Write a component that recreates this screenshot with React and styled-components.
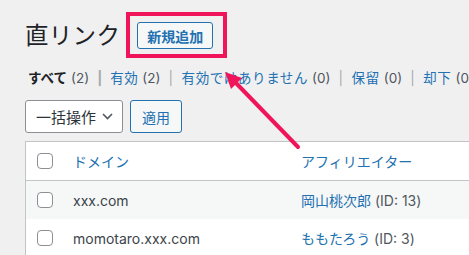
import styled, { createGlobalStyle } from "styled-components";

const GlobalStyle = createGlobalStyle`
  html, body {
    margin: 0;
    padding: 0;
    background: #f0f0f1;
    overflow: hidden;
  }
  body {
    font-family: Inter, "Noto Sans CJK JP", sans-serif;
    color: #3c434a;
  }
`;

const PINK = "#f0145a";
const BLUE = "#2271b1";

const Page = styled.div`
  position: relative;
  width: 469px;
  height: 255px;
  padding: 21px 0 0 25px;
  box-sizing: border-box;
  overflow: hidden;
`;

const TitleRow = styled.div`
  display: flex;
  align-items: center;
  gap: 17px;
  height: 29px;
`;

const Title = styled.h1`
  margin: 0;
  font-size: 23.5px;
  font-weight: 400;
  line-height: 29px;
  color: #1d2327;
  letter-spacing: 0.3px;
`;

const AddWrap = styled.div`
  position: relative;
  display: flex;
`;

const AddButton = styled.button`
  width: 76px;
  height: 27px;
  padding: 0;
  border: 1px solid ${BLUE};
  border-radius: 3px;
  background: #f6f7f7;
  color: ${BLUE};
  font-family: inherit;
  font-size: 14px;
  font-weight: 600;
`;

const Highlight = styled.div`
  position: absolute;
  left: -11px;
  top: -10px;
  width: 101px;
  height: 46px;
  box-sizing: border-box;
  border: 4px solid ${PINK};
  pointer-events: none;
`;

const Filters = styled.ul`
  display: flex;
  align-items: center;
  margin: 18px 0 0 3px;
  padding: 0;
  list-style: none;
  font-size: 13.5px;
  line-height: 20px;
  white-space: nowrap;
`;

const FilterItem = styled.li`
  display: flex;
  align-items: center;
  color: ${(p) => (p.$current ? "#1d2327" : BLUE)};
  font-weight: ${(p) => (p.$current ? 700 : 400)};
  letter-spacing: ${(p) => (p.$current ? "0" : "0.6px")};
`;

const Count = styled.span`
  margin-left: 4px;
  color: #50575e;
  font-weight: 400;
  letter-spacing: 0;
`;

const Sep = styled.span`
  margin: 0 8px;
  color: #a7aaad;
`;

const BulkRow = styled.div`
  display: flex;
  gap: 7px;
  margin-top: 12px;
`;

const BulkSelect = styled.div`
  display: flex;
  align-items: center;
  justify-content: space-between;
  width: 98px;
  height: 33px;
  box-sizing: border-box;
  padding: 0 9px 0 10px;
  border: 1px solid #8c8f94;
  border-radius: 3px;
  background: #fff;
  font-size: 15px;
  color: #2c3338;
`;

const ApplyButton = styled.button`
  width: 52px;
  height: 33px;
  padding: 0;
  border: 1px solid ${BLUE};
  border-radius: 3px;
  background: #f6f7f7;
  color: ${BLUE};
  font-family: inherit;
  font-size: 14px;
`;

const Table = styled.div`
  margin-top: 8px;
  width: 480px;
  border: 1px solid #c3c4c7;
  border-right: none;
  background: #fff;
`;

const Row = styled.div`
  display: grid;
  grid-template-columns: 37px 228px 1fr;
  align-items: center;
  height: 38px;
  background: ${(p) => (p.$alt ? "#f6f7f7" : "#fff")};
  border-bottom: ${(p) => (p.$head ? "1px solid #c3c4c7" : "none")};
  font-size: 14px;
`;

const Check = styled.span`
  width: 16px;
  height: 16px;
  margin-left: 11px;
  box-sizing: border-box;
  border: 1px solid #8c8f94;
  border-radius: 4px;
  background: #fff;
`;

const Cell = styled.span`
  padding-left: 10px;
  color: ${(p) => (p.$link ? BLUE : "#3c434a")};
  white-space: nowrap;
`;

const Name = styled.span`
  color: ${BLUE};
`;

const Muted = styled.span`
  color: #50575e;
`;

const Arrow = styled.svg`
  position: absolute;
  left: 0;
  top: 0;
  pointer-events: none;
`;

const filters = [
  { label: "すべて", count: 2, current: true },
  { label: "有効", count: 2 },
  { label: "有効ではありません", count: 0 },
  { label: "保留", count: 0 },
  { label: "却下", count: 0 },
];

const rows = [
  { domain: "xxx.com", name: "岡山桃次郎", id: 13 },
  { domain: "momotaro.xxx.com", name: "ももたろう", id: 3 },
];

export default function App() {
  return (
    <>
      <GlobalStyle />
      <Page>
        <TitleRow>
          <Title>直リンク</Title>
          <AddWrap>
            <AddButton>新規追加</AddButton>
            <Highlight />
          </AddWrap>
        </TitleRow>

        <Filters>
          {filters.map((f, i) => (
            <FilterItem key={f.label} $current={f.current}>
              {f.label}
              <Count>({f.count})</Count>
              {i < filters.length - 1 && <Sep>|</Sep>}
            </FilterItem>
          ))}
        </Filters>

        <BulkRow>
          <BulkSelect>
            一括操作
            <svg width="11" height="7" viewBox="0 0 11 7">
              <path d="M1 1l4.5 4.5L10 1" fill="none" stroke="#50575e" strokeWidth="1.6" />
            </svg>
          </BulkSelect>
          <ApplyButton>適用</ApplyButton>
        </BulkRow>

        <Table>
          <Row $head>
            <Check />
            <Cell $link>ドメイン</Cell>
            <Cell $link>アフィリエイター</Cell>
          </Row>
          {rows.map((r, i) => (
            <Row key={r.domain} $alt={i % 2 === 0}>
              <Check />
              <Cell>{r.domain}</Cell>
              <Cell>
                <Name>{r.name}</Name> <Muted>(ID: {r.id})</Muted>
              </Cell>
            </Row>
          ))}
        </Table>

        <Arrow width="469" height="255" viewBox="0 0 469 255">
          <line x1="298" y1="147" x2="235" y2="82" stroke={PINK} strokeWidth="4" strokeLinecap="round" />
          <polygon points="225,72 242,78 231,89" fill={PINK} />
        </Arrow>
      </Page>
    </>
  );
}
